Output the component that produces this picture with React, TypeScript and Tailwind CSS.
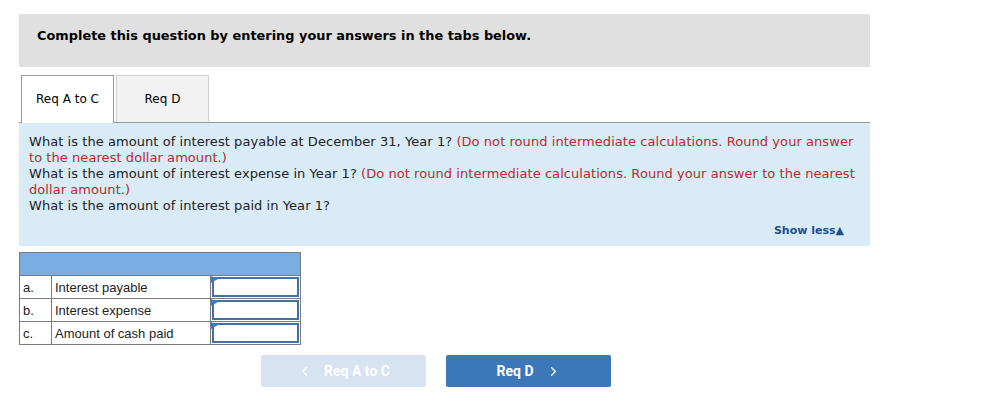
import React from "react";
import { ChevronLeft, ChevronRight } from "lucide-react";

const Flag = () => (
  <svg className="absolute left-0 top-0" width="7" height="8" viewBox="0 0 7 8">
    <polygon points="0,0 7,3 0,7" fill="#3b7ac8" />
  </svg>
);

const rows = [
  { k: "a.", label: "Interest payable" },
  { k: "b.", label: "Interest expense" },
  { k: "c.", label: "Amount of cash paid" },
];

export default function App() {
  return (
    <div className="w-[999px] h-[412px] bg-white pt-[14px] pl-[19px]" style={{ fontFamily: '"DejaVu Sans", Verdana, sans-serif' }}>
      <div className="w-[851px] h-[53px] bg-[#e0e0e0] pt-[14px] pl-[18px]">
        <div className="text-[12.9px] leading-[16px] font-bold text-black">Complete this question by entering your answers in the tabs below.</div>
      </div>
      <div className="mt-[8px] w-[851px] flex items-end pl-[2px] border-b border-[#9a9a9a] h-[48px]">
        <div className="w-[93px] h-[48px] bg-white border border-b-0 border-[#9a9a9a] flex items-center justify-center text-[12px] text-black -mb-px pb-px relative z-10">Req A to C</div>
        <div className="ml-[2px] w-[93px] h-[47px] bg-[#f2f2f2] border border-b-0 border-[#cfcfcf] flex items-center justify-center text-[12px] text-black">Req D</div>
      </div>
      <div className="w-[851px] h-[123px] bg-[#daebf8] pt-[11px] px-[10px] text-[13px] leading-[16px] tracking-[0.06px] text-[#222] relative">
        <div>
          What is the amount of interest payable at December 31, Year 1? <span className="text-[#c0272d]">(Do not round intermediate calculations. Round your answer to the nearest dollar amount.)</span>
        </div>
        <div>
          What is the amount of interest expense in Year 1? <span className="text-[#c0272d]">(Do not round intermediate calculations. Round your answer to the nearest dollar amount.)</span>
        </div>
        <div>What is the amount of interest paid in Year 1?</div>
        <div className="absolute right-[26px] bottom-[7px] text-[11px] tracking-normal font-bold text-[#1d4f8a]">Show less▲</div>
      </div>
      <div className="mt-[6px] w-[282px] border border-[#7a7a7a]" style={{ fontFamily: '"Liberation Sans", Arial, sans-serif' }}>
        <div className="h-[23px] bg-[#7aaee3] border-b border-[#7a7a7a]" />
        {rows.map((r, i) => (
          <div key={r.k} className={`flex text-[13px] text-[#222] ${i < 2 ? "h-[23px] border-b border-[#7a7a7a]" : "h-[22px]"}`}>
            <div className="w-[32px] border-r border-[#7a7a7a] pl-[3px] pt-[2px] flex items-center">{r.k}</div>
            <div className="w-[159px] border-r border-[#7a7a7a] pl-[3px] pt-[2px] flex items-center">{r.label}</div>
            <div className="flex-1 p-px relative">
              <div className="w-full h-full border-2 border-[#4470aa] bg-white" />
              <Flag />
            </div>
          </div>
        ))}
      </div>
      <div className="flex mt-[10px] ml-[242px] gap-[20px]" style={{ fontFamily: 'Roboto, "Liberation Sans", sans-serif' }}>
        <div className="w-[165px] h-[32px] rounded-[2px] bg-[#d7e3f1] text-white text-[14px] font-bold flex items-center justify-center gap-[12px]">
          <ChevronLeft size={15} strokeWidth={2} />
          <span>Req A to C</span>
        </div>
        <div className="w-[165px] h-[32px] rounded-[2px] bg-[#3b77b9] text-white text-[14px] font-bold flex items-center justify-center gap-[12px]">
          <span>Req D</span>
          <ChevronRight size={15} strokeWidth={2} />
        </div>
      </div>
    </div>
  );
}
